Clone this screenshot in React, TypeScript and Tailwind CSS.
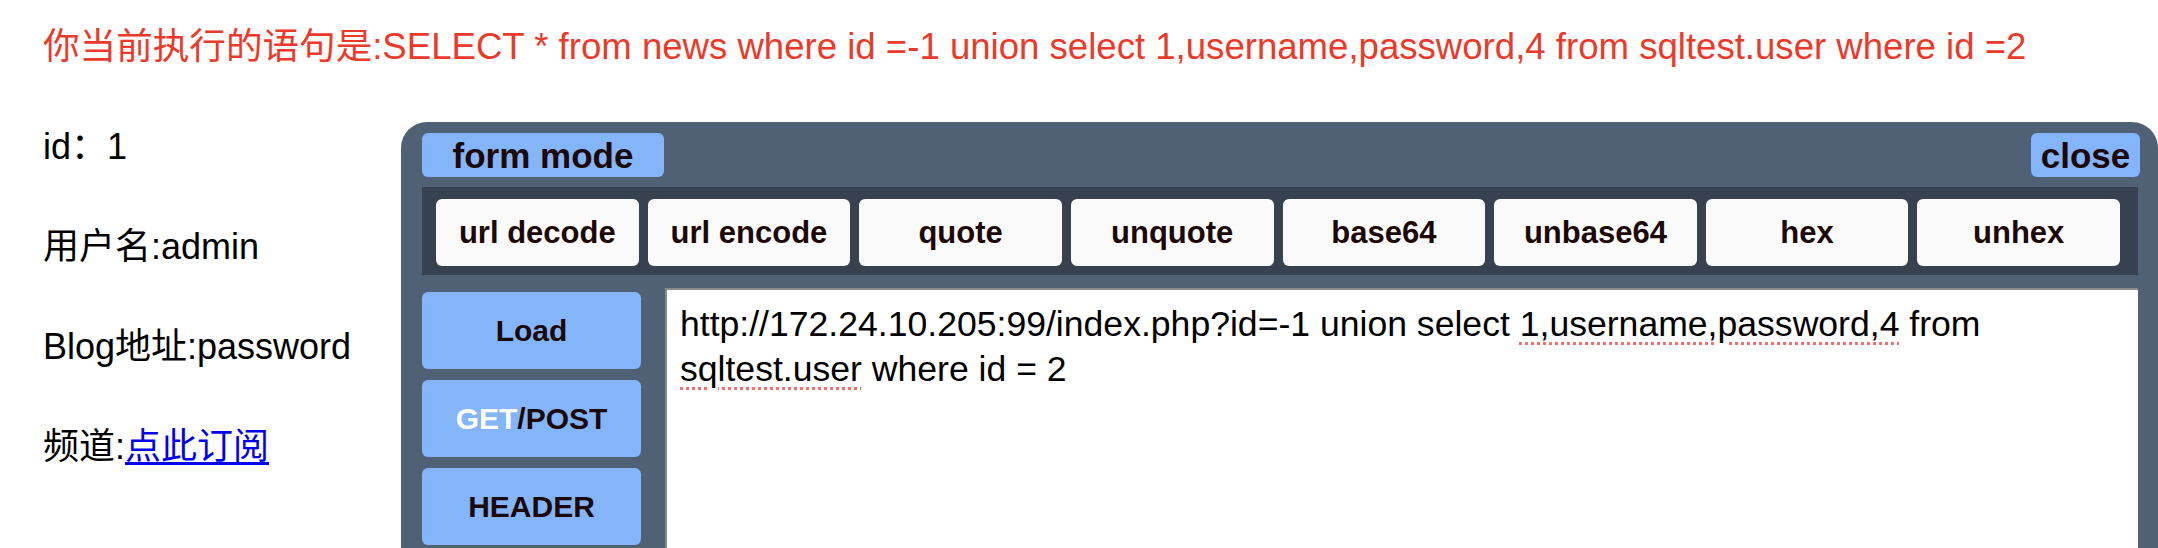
import React from 'react';

const tools = ['url decode', 'url encode', 'quote', 'unquote', 'base64', 'unbase64', 'hex', 'unhex'];

const font = { fontFamily: '"Liberation Sans", "Noto Sans CJK SC", sans-serif' };

export default function App() {
  return (
    <div className="h-[548px] w-[2158px] overflow-hidden bg-white text-black" style={font}>
      <h1 className="pl-[43px] pt-[26px] text-[36.6px] font-normal leading-[41px] text-[#ea3a2c]">
        你当前执行的语句是:SELECT * from news where id =-1 union select 1,username,password,4 from sqltest.user where id =2
      </h1>

      <div className="mt-[55px] flex">
        {/* result rows */}
        <div className="w-[401px] shrink-0 pl-[43px] pt-[4px] text-[36px] leading-[41px]">
          <p className="h-[100px]">id：1</p>
          <p className="h-[100px]">用户名:admin</p>
          <p className="h-[100px]">Blog地址:password</p>
          <p className="h-[100px]">
            频道:<a href="#" className="text-[#0000ee] underline underline-offset-[3px]">点此订阅</a>
          </p>
        </div>

        {/* hackbar panel */}
        <div className="flex h-[430px] flex-1 flex-col rounded-t-[26px] bg-[#516175] pl-[21px] pr-[20px] pt-[11px]">
          <div className="flex items-center justify-between">
            <button className="h-[44px] w-[242px] rounded-[6px] bg-[#84b4f9] text-[35px] font-bold leading-none text-[#1c0808]">
              form mode
            </button>
            <button className="-mr-[2px] h-[44px] w-[109px] rounded-[6px] bg-[#84b4f9] text-[35px] font-bold leading-none text-[#1c0808]">
              close
            </button>
          </div>

          <div className="mt-[10px] grid h-[88px] grid-cols-8 gap-[9px] bg-[#38414f] pb-[9px] pl-[14px] pr-[18px] pt-[12px]">
            {tools.map((t) => (
              <button
                key={t}
                className="h-[67px] rounded-[6px] bg-[#fafafa] text-[31px] font-bold leading-none text-[#1c0808]"
              >
                {t}
              </button>
            ))}
          </div>

          <div className="mt-[13px] flex flex-1 gap-[24px]">
            <div className="flex w-[219px] shrink-0 flex-col gap-[11px] pt-[4px]">
              <button className="h-[77px] rounded-[6px] bg-[#84b4f9] text-[30px] font-bold text-[#1c0808]">Load</button>
              <button className="h-[77px] rounded-[6px] bg-[#84b4f9] text-[30px] font-bold text-[#1c0808]">
                <span className="text-white">GET</span>/POST
              </button>
              <button className="h-[77px] rounded-[6px] bg-[#84b4f9] text-[30px] font-bold text-[#1c0808]">HEADER</button>
            </div>
            <div className="flex-1 border-l-2 border-t-2 border-[#8a8a8a] bg-white px-[13px] pt-[12px] text-[35.6px] leading-[45px] text-black">
              http://172.24.10.205:99/index.php?id=-1 union select{' '}
              <span className="underline decoration-[#f07070] decoration-dotted decoration-[3px] underline-offset-[6px]">
                1,username,password,4
              </span>{' '}
              from{' '}
              <span className="underline decoration-[#f07070] decoration-dotted decoration-[3px] underline-offset-[6px]">
                sqltest.user
              </span>{' '}
              where id = 2
            </div>
          </div>
        </div>
      </div>
    </div>
  );
}
